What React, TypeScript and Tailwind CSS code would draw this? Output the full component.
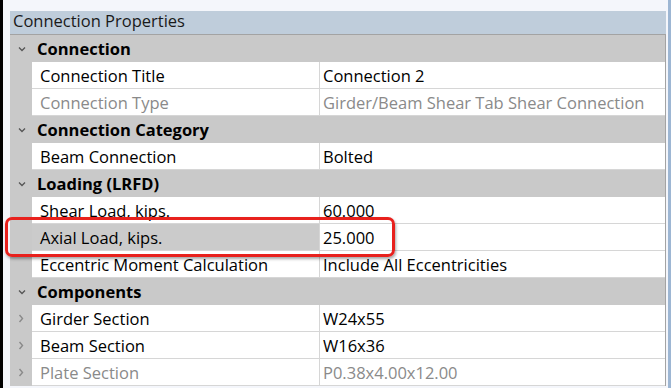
type Row =
  | { kind: 'category'; label: string }
  | { kind: 'prop'; name: string; value: string; muted?: boolean; expandable?: boolean; selected?: boolean };

const rows: Row[] = [
  { kind: 'category', label: 'Connection' },
  { kind: 'prop', name: 'Connection Title', value: 'Connection 2' },
  { kind: 'prop', name: 'Connection Type', value: 'Girder/Beam Shear Tab Shear Connection', muted: true },
  { kind: 'category', label: 'Connection Category' },
  { kind: 'prop', name: 'Beam Connection', value: 'Bolted' },
  { kind: 'category', label: 'Loading (LRFD)' },
  { kind: 'prop', name: 'Shear Load, kips.', value: '60.000' },
  { kind: 'prop', name: 'Axial Load, kips.', value: '25.000', selected: true },
  { kind: 'prop', name: 'Eccentric Moment Calculation', value: 'Include All Eccentricities' },
  { kind: 'category', label: 'Components' },
  { kind: 'prop', name: 'Girder Section', value: 'W24x55', expandable: true },
  { kind: 'prop', name: 'Beam Section', value: 'W16x36', expandable: true },
  { kind: 'prop', name: 'Plate Section', value: 'P0.38x4.00x12.00', muted: true, expandable: true },
];

function ChevronDown() {
  return (
    <svg width="8" height="6" viewBox="0 0 8 6" className="block">
      <polyline points="1,1.5 4,4.5 7,1.5" fill="none" stroke="#555" strokeWidth="1.3" />
    </svg>
  );
}

function ChevronRight() {
  return (
    <svg width="6" height="9" viewBox="0 0 6 9" className="block">
      <polyline points="1.5,1 4.5,4.5 1.5,8" fill="none" stroke="#8a8a8a" strokeWidth="1.4" />
    </svg>
  );
}

export default function App() {
  return (
    <div
      className="relative flex w-[671px] h-[388px] overflow-hidden bg-[#f4f6fb] text-[16.5px] leading-[20px] text-[#111]"
      style={{ fontFamily: '"Open Sans", "Noto Sans", sans-serif' }}
    >
      <div className="w-[3px] shrink-0 bg-black" />
      <div className="w-[7px] shrink-0" />

      <div className="flex flex-col w-[656px] shrink-0 pt-[11px]">
        <div className="h-[24px] flex items-start pt-[0px] pl-[3px] bg-[#bfcddb] text-[#1a1a1a] border-b border-[#a3a3a3]">
          Connection Properties
        </div>
        <div className="flex flex-col border-r border-[#a3a3a3] bg-[#c9c9c9]">
          {rows.map((row, i) =>
            row.kind === 'category' ? (
              <div key={i} className="h-[27px] flex items-center">
                <div className="w-[22px] flex justify-center pl-[1px]">
                  <ChevronDown />
                </div>
                <span className="pl-[5px] pt-[1px] font-bold text-black">{row.label}</span>
              </div>
            ) : (
              <div key={i} className="h-[27px] flex">
                <div className="w-[22px] flex items-center justify-center pr-[1px]">
                  {row.expandable && <ChevronRight />}
                </div>
                <div
                  className={`w-[288px] flex items-center pl-[8px] pt-[1px] border-r border-b border-[#d6d6d6] ${
                    row.selected ? 'bg-[#cbcbcb]' : 'bg-white'
                  } ${row.muted ? 'text-[#8a8a8a]' : 'text-black'}`}
                >
                  {row.name}
                </div>
                <div
                  className={`flex-1 flex items-center pl-[3px] pt-[1px] bg-white border-b border-[#d6d6d6] ${
                    row.muted ? 'text-[#8a8a8a]' : 'text-black'
                  }`}
                >
                  {row.value}
                </div>
              </div>
            )
          )}
        </div>
      </div>

      <div className="w-[2px] shrink-0" />
      <div className="flex-1 bg-[#9db6d3]" />

      <div className="absolute left-[5px] top-[217px] w-[390px] h-[40px] rounded-[7px] border-[3px] border-[#e8211d] shadow-[1px_2px_3px_rgba(0,0,0,0.35)]" />
    </div>
  );
}
